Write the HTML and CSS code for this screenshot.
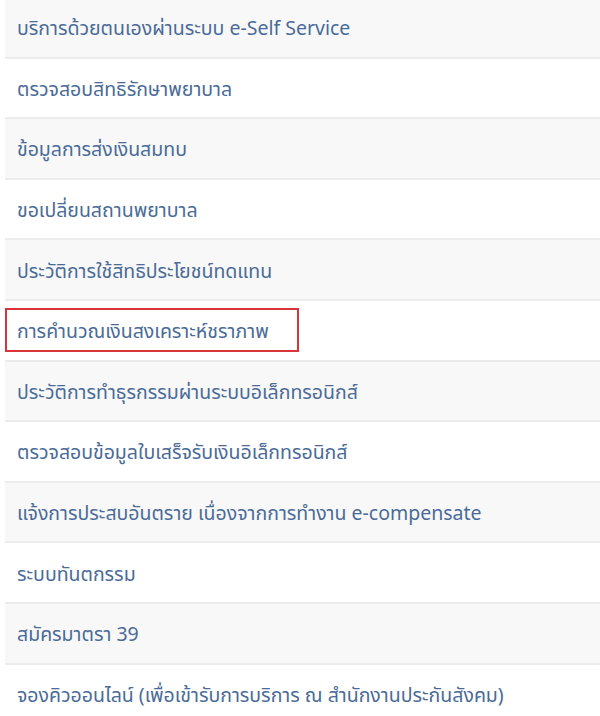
FILE: index.html
```html
<!DOCTYPE html>
<html lang="th">
<head>
<meta charset="utf-8">
<link rel="stylesheet" href="styles.css">
</head>
<body>
<ul class="menu">
  <li class="item alt">บริการด้วยตนเองผ่านระบบ e-Self Service</li>
  <li class="item">ตรวจสอบสิทธิรักษาพยาบาล</li>
  <li class="item alt">ข้อมูลการส่งเงินสมทบ</li>
  <li class="item">ขอเปลี่ยนสถานพยาบาล</li>
  <li class="item alt">ประวัติการใช้สิทธิประโยชน์ทดแทน</li>
  <li class="item marked">การคำนวณเงินสงเคราะห์ชราภาพ<span class="mark"></span></li>
  <li class="item alt">ประวัติการทำธุรกรรมผ่านระบบอิเล็กทรอนิกส์</li>
  <li class="item">ตรวจสอบข้อมูลใบเสร็จรับเงินอิเล็กทรอนิกส์</li>
  <li class="item alt">แจ้งการประสบอันตราย เนื่องจากการทำงาน e-compensate</li>
  <li class="item">ระบบทันตกรรม</li>
  <li class="item alt">สมัครมาตรา 39</li>
  <li class="item">จองคิวออนไลน์ (เพื่อเข้ารับการบริการ ณ สำนักงานประกันสังคม)</li>
</ul>
</body>
</html>
```
FILE: styles.css
```css
html, body {
  margin: 0;
  padding: 0;
  background: #ffffff;
  overflow: hidden;
}
.menu {
  list-style: none;
  margin: -2px 0 0 5px;
  padding: 0;
}
.item {
  position: relative;
  box-sizing: border-box;
  height: 60.6px;
  display: flex;
  align-items: center;
  padding: 4px 0 0 12px;
  border-bottom: 2px solid #ececec;
  font-family: "Noto Sans Thai", "Noto Sans", "Open Sans", sans-serif;
  font-size: 19.5px;
  color: #4a6b98;
  background: #ffffff;
  white-space: nowrap;
}
.item.alt {
  background: #f8f8f8;
}
.mark {
  position: absolute;
  left: 0;
  top: 7px;
  width: 294px;
  height: 44px;
  box-sizing: border-box;
  border: 2px solid #d9343a;
}
```
